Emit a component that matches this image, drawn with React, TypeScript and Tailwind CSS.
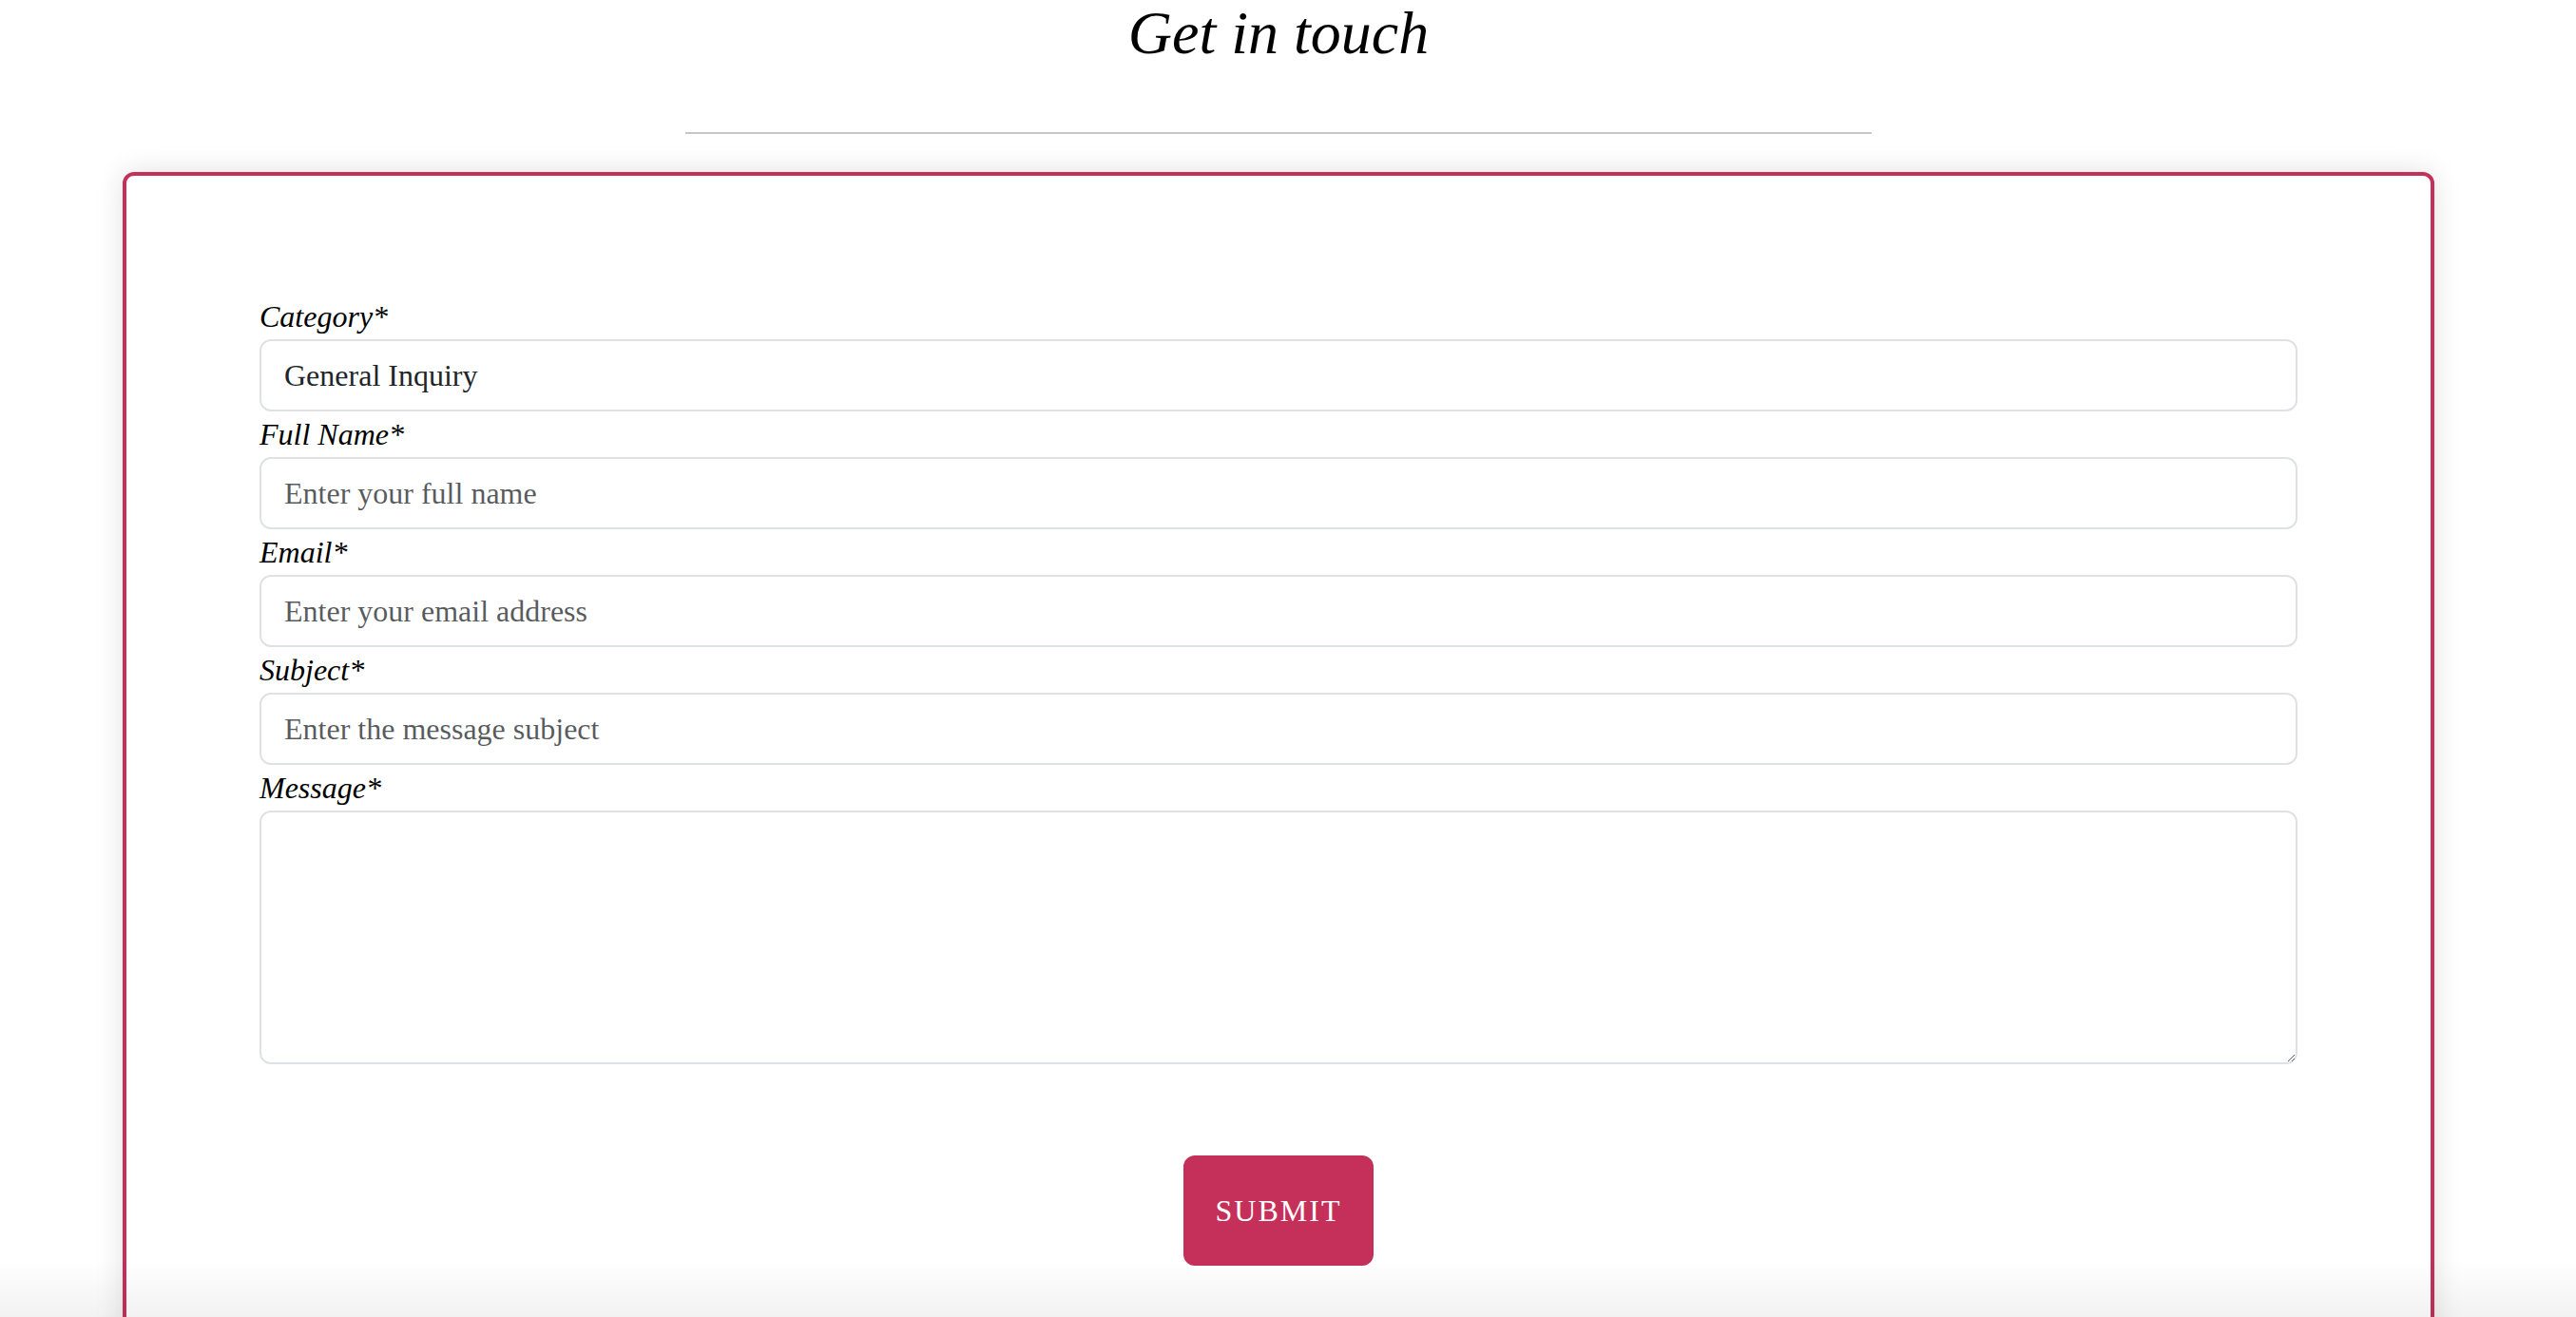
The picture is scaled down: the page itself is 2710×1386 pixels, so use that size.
import React from "react";

const serif = { fontFamily: '"Liberation Serif", "Times New Roman", Times, serif' };

function Field({ label, placeholder, value }: { label: string; placeholder?: string; value?: string }) {
  return (
    <div className="flex flex-col">
      <label className="italic text-[32px] leading-[48px] text-black">{label}</label>
      <input
        readOnly={value !== undefined}
        defaultValue={value}
        placeholder={placeholder}
        className="h-[76px] w-full rounded-[12px] border-2 border-[#dee2e6] bg-white px-[24px] text-[32px] leading-[48px] text-[#212529] outline-none placeholder:text-[rgba(33,37,41,0.75)]"
        style={serif}
      />
    </div>
  );
}

export default function App() {
  return (
    <div className="relative min-h-screen w-[2690px] bg-white" style={serif}>
      <h1 className="m-0 text-center text-[64px] font-normal italic leading-[1.1] text-black">Get in touch</h1>
      <div className="mx-auto mt-[69px] h-[2px] w-[1248px] bg-[#c6c6c6]" />
      <div className="mx-[129px] mt-[40px] rounded-[12px] border-4 border-[#c4305a] bg-white px-[140px] pb-[120px] pt-[124px] shadow-[0_0_30px_rgba(0,0,0,0.12)]">
        <form className="flex flex-col" onSubmit={(e) => e.preventDefault()}>
          <Field label="Category*" value="General Inquiry" />
          <Field label="Full Name*" placeholder="Enter your full name" />
          <Field label="Email*" placeholder="Enter your email address" />
          <Field label="Subject*" placeholder="Enter the message subject" />
          <div className="flex flex-col">
            <label className="italic text-[32px] leading-[48px] text-black">Message*</label>
            <textarea
              className="h-[267px] w-full rounded-[12px] border-2 border-[#dee2e6] bg-white px-[24px] py-[12px] text-[32px] leading-[48px] text-[#212529] outline-none"
              style={serif}
            />
          </div>
          <div className="mt-[96px] flex justify-center">
            <button
              type="submit"
              className="flex h-[116px] w-[200px] items-center justify-center rounded-[12px] bg-[#c4305a] text-[32px] uppercase tracking-[2px] text-white"
              style={serif}
            >
              Submit
            </button>
          </div>
        </form>
      </div>
      <div className="pointer-events-none fixed bottom-0 left-0 right-0 h-[60px] bg-linear-to-b from-transparent to-[rgba(0,0,0,0.05)]" />
    </div>
  );
}
